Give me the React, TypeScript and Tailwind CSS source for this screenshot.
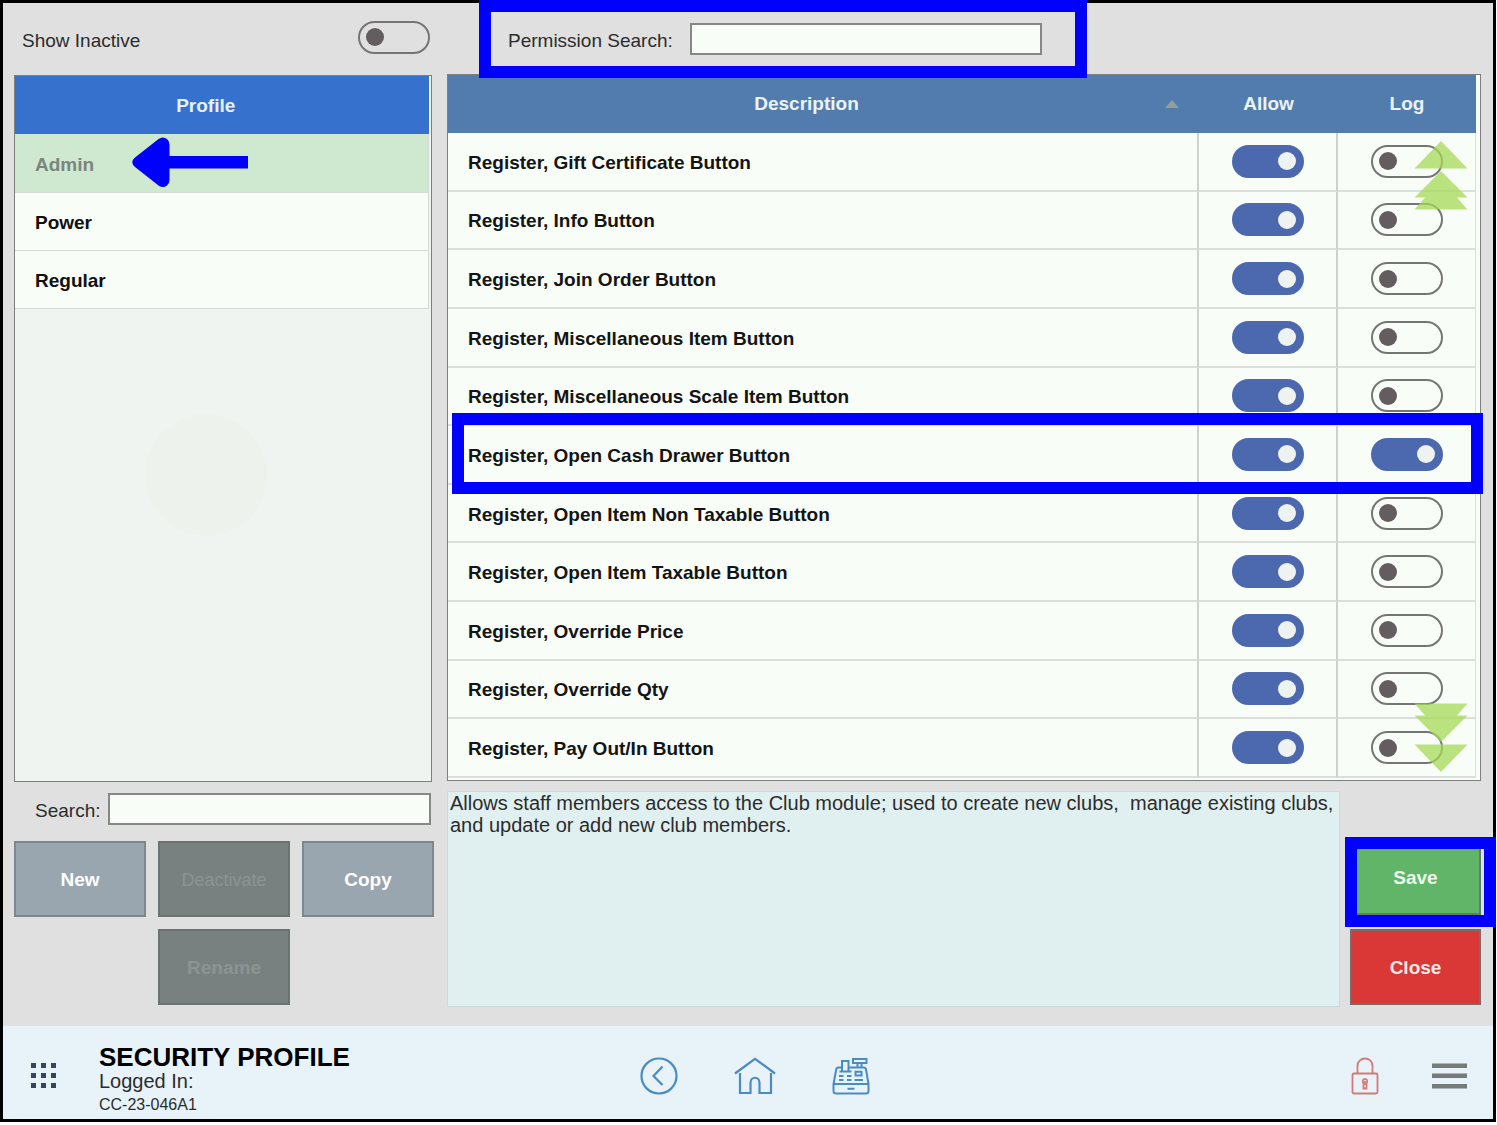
import React, { useState } from 'react';

interface Permission {
  name: string;
  allow: boolean;
  log: boolean;
  highlighted?: boolean;
}

const PROFILES = ['Admin', 'Power', 'Regular'];

const PERMISSIONS: Permission[] = [
  { name: 'Register, Gift Certificate Button', allow: true, log: false },
  { name: 'Register, Info Button', allow: true, log: false },
  { name: 'Register, Join Order Button', allow: true, log: false },
  { name: 'Register, Miscellaneous Item Button', allow: true, log: false },
  { name: 'Register, Miscellaneous Scale Item Button', allow: true, log: false },
  { name: 'Register, Open Cash Drawer Button', allow: true, log: true, highlighted: true },
  { name: 'Register, Open Item Non Taxable Button', allow: true, log: false },
  { name: 'Register, Open Item Taxable Button', allow: true, log: false },
  { name: 'Register, Override Price', allow: true, log: false },
  { name: 'Register, Override Qty', allow: true, log: false },
  { name: 'Register, Pay Out/In Button', allow: true, log: false },
];

interface ToggleProps {
  id?: string;
  label?: string;
  initial?: boolean;
}

const Toggle: React.FC<ToggleProps> = ({ id, label, initial = false }) => {
  const [on, setOn] = useState(initial);
  return (
    <input
      id={id}
      type="checkbox"
      role="switch"
      aria-label={label}
      checked={on}
      onChange={() => setOn(!on)}
      className="appearance-none shrink-0 w-[72px] h-[33px] px-[6px] flex items-center rounded-full border-2 border-[#767575] cursor-pointer before:block before:size-[18px] before:rounded-full before:bg-[#635d60] checked:bg-[#4c68af] checked:border-[#4c68af] checked:before:bg-[#eff3ef] checked:before:ml-[38px]"
    />
  );
};

const Highlight: React.FC<{ className: string }> = ({ className }) => (
  <div className={`absolute z-10 border-12 border-[#0000ff] pointer-events-none ${className}`}></div>
);

const ScrollArrows: React.FC<{ label: string; className: string; flip?: boolean }> = ({ label, className, flip }) => (
  <button aria-label={label} className={`absolute right-[12px] ${className}`}>
    <svg width="54" height="69" viewBox="0 0 54 69" className={flip ? 'rotate-180' : ''}>
      <path
        d="M27 0 L53.5 27.5 H0.5 Z M27 30 L53.5 56.5 H43 L53.5 68.5 H0.5 L11 56.5 H0.5 Z"
        fill="#a5da58"
        fillOpacity="0.75"
      />
    </svg>
  </button>
);

const ProfilePanel = () => (
  <section className="w-[420px] shrink-0">
    <div className="h-[72px] pl-2 pr-1 flex items-center justify-between">
      <label htmlFor="show-inactive" className="pt-1">Show Inactive</label>
      <div className="pb-1">
        <Toggle id="show-inactive" />
      </div>
    </div>

    <div className="relative h-[707px] mr-[2px] border border-[#7b7f7d] bg-[#eff4f0] pr-[2px]">
      <div className="absolute left-[130px] top-[338px] size-[122px] rounded-full bg-[#eef2ed]"></div>
      <table className="relative w-full border-collapse font-bold">
        <thead>
          <tr className="h-[58px] bg-[#3671ce] text-[#e6f1f7]">
            <th className="pr-8 pt-px">Profile</th>
          </tr>
        </thead>
        <tbody>
          {PROFILES.map((profile, i) => (
            <tr
              key={profile}
              className={i === 0 ? 'bg-[#cfe9d0] text-[#7b857d]' : 'bg-[#f8fdf8] text-[#101010]'}
            >
              <td className="relative h-[58px] pl-5 pt-1 border-b border-r border-[#d6dad6]">
                {profile}
                {i === 0 && (
                  <svg width="116" height="50" viewBox="0 0 116 50" className="absolute left-[117px] top-[3px]" fill="#0000ff">
                    <path d="M3 20.5 L26.5 2 Q31 -1 35 2 Q37.5 4 37.5 7.5 V19 H116 V31.5 H37.5 V43 Q37.5 46 35 48.5 Q31 51.5 26.5 48.5 L3 30 Q-2.5 25 3 20.5 Z" />
                  </svg>
                )}
              </td>
            </tr>
          ))}
        </tbody>
      </table>
    </div>

    <div className="mt-[11px] pl-[21px] pr-[3px] flex items-center">
      <label htmlFor="profile-search" className="w-[73px] pt-1">Search:</label>
      <input id="profile-search" type="text" className="flex-1 min-w-0 h-8 px-2 border-2 border-[#858885] bg-[#f8fdf8]" />
    </div>

    <div className="mt-4 grid grid-cols-3 gap-3 font-bold">
      <button className="h-[76px] pt-[2px] border-2 border-[#7d878d] bg-[#99a6af] text-white">New</button>
      <button disabled className="h-[76px] pt-[2px] border-2 border-[#6c7270] bg-[#798180] text-[#8d9391] text-lg font-normal">Deactivate</button>
      <button className="h-[76px] pt-[2px] border-2 border-[#7d878d] bg-[#99a6af] text-white">Copy</button>
      <button disabled className="col-start-2 h-[76px] pt-[2px] border-2 border-[#6c7270] bg-[#798180] text-[#8d9391]">Rename</button>
    </div>
  </section>
);

const PermissionPanel = () => (
  <section className="flex-1 min-w-0">
    <div className="relative h-[71px] pl-[61px] flex items-center">
      <label htmlFor="permission-search" className="w-[182px] pt-1">Permission Search:</label>
      <input id="permission-search" type="text" className="w-[352px] h-8 px-2 border-2 border-[#858885] bg-[#f8fdf8]" />
      <Highlight className="left-[32px] -top-[3px] w-[608px] h-[78px]" />
    </div>

    <div className="relative h-[707px] border border-[#7b7f7d] bg-[#f8fdf8] pr-1">
      <table className="w-full h-[703px] table-fixed border-separate border-spacing-0 font-bold">
        <colgroup>
          <col />
          <col className="w-[139px]" />
          <col className="w-[138px]" />
        </colgroup>
        <thead>
          <tr className="h-[58px] bg-[#537cae] text-[#eaf4f4]">
            <th>
              <div className="flex items-center pr-5">
                <span className="flex-1">Description</span>
                <svg width="14" height="8" viewBox="0 0 14 8">
                  <path d="M7 0 L14 8 H0 Z" fill="#929f9b" />
                </svg>
              </div>
            </th>
            <th>Allow</th>
            <th>Log</th>
          </tr>
        </thead>
        <tbody className="text-[#141414]">
          {PERMISSIONS.map((permission) => (
            <tr key={permission.name} className="relative">
              <td className="pl-5 pt-[3px] border-b-2 border-r-2 border-[#dcdedc] border-r-[#cfd1cf]">
                {permission.name}
                {permission.highlighted && <Highlight className="left-1 -right-[7px] -top-[13px] -bottom-[9px]" />}
              </td>
              <td className="border-b-2 border-r-2 border-[#dcdedc] border-r-[#cfd1cf]">
                <div className="flex justify-center">
                  <Toggle label={`Allow ${permission.name}`} initial={permission.allow} />
                </div>
              </td>
              <td className="border-b-2 border-r border-[#dcdedc]">
                <div className="flex justify-center">
                  <Toggle label={`Log ${permission.name}`} initial={permission.log} />
                </div>
              </td>
            </tr>
          ))}
        </tbody>
      </table>
      <ScrollArrows label="Scroll up" className="top-[66px]" />
      <ScrollArrows label="Scroll down" className="bottom-[8px]" flip />
    </div>

    <div className="mt-[10px] flex gap-[10px]">
      <p className="flex-1 h-[216px] border border-[#cbdcdc] bg-[#e0f0f0] pl-[2px] text-[20px] leading-[22px] whitespace-pre-wrap">
        Allows staff members access to the Club module; used to create new clubs,{'  '}manage existing clubs, and update or add new club members.
      </p>
      <div className="w-[131px] flex flex-col justify-end gap-[14px] pb-[2px] font-bold">
        <div className="relative">
          <button className="block w-full h-[76px] pt-[2px] border-2 border-[#667a69] bg-[#60b568] text-[#eef8ea]">Save</button>
          <Highlight className="-left-[5px] -right-[15px] -top-[2px] -bottom-3" />
        </div>
        <button className="h-[76px] pt-[2px] border-2 border-[#7c6a6a] bg-[#d93837] text-[#fbe9e6]">Close</button>
      </div>
    </div>
  </section>
);

const BackIcon = () => (
  <svg width="38" height="38" viewBox="0 0 38 38" fill="none" stroke="#4a8bc2" strokeWidth="2.2">
    <circle cx="19" cy="19" r="17.5" />
    <path d="M22.5 9.5 L13.5 19 L22.5 28" />
  </svg>
);

const HomeIcon = () => (
  <svg width="42" height="38" viewBox="0 0 42 38" fill="none" stroke="#4a8bc2" strokeWidth="2.2">
    <path d="M1 16.5 L21 1.8 L41 16.5" />
    <path d="M6 16 V36 H16.5 V26 C16.5 19 25.5 19 25.5 26 V36 H37 V16" />
  </svg>
);

const RegisterIcon = () => (
  <svg width="38" height="38" viewBox="0 0 38 38" fill="none" stroke="#4a8bc2" strokeWidth="2">
    <path d="M10 10.5 H6.5 Q4.5 10.5 4.2 12.5 L1.5 27 V34 Q1.5 36.5 4 36.5 H34 Q36.5 36.5 36.5 34 V27 L34 12.5 Q33.7 10.5 31.5 10.5 H17" />
    <path d="M1.5 27 H36.5 M15.5 31.8 H22.5" />
    <path d="M10 15 V4 H16.5 V15 M7.5 14.5 H19.5" />
    <path d="M21 2 H34.5 V6 H21 Z M25.5 6 V10 M29.5 6 V10" />
    <path d="M23.5 14.8 H29.5 V18.5 H23.5 Z" />
    <path d="M7 19 H11.5 M15 19 H19.5 M7 23 H11.5 M15 23 H19.5 M22.5 23 H31" />
  </svg>
);

const LockIcon = () => (
  <svg width="28" height="38" viewBox="0 0 28 38" fill="none" stroke="#d47a78" strokeWidth="1.8">
    <rect x="1.5" y="16.5" width="25" height="20" rx="1.5" />
    <path d="M6.5 16.5 V9 C6.500 -1 21.5 -1 21.5 9 V16.5" />
    <path d="M12.5 26.5 C9 20.5 19 20.5 15.5 26.5 V31.500 H12.5 Z" />
    <path d="M14 24 V28" />
  </svg>
);

const Footer = () => (
  <footer className="h-[93px] bg-[#e7f3f9] grid grid-cols-[1fr_auto_1fr] items-center">
    <div className="flex items-center">
      <button aria-label="Apps" className="ml-[28px] pt-[7px] w-[25px]">
        <svg width="26" height="26" viewBox="0 0 26 26" fill="#33465c">
          {[0, 10, 20].map((y) => [0, 10, 20].map((x) => <rect key={`${x}-${y}`} x={x} y={y} width="5" height="5" />))}
        </svg>
      </button>
      <div className="ml-[43px] pt-[16px] leading-6">
        <h1 className="text-[26px] font-bold text-black">SECURITY PROFILE</h1>
        <p className="text-[20px]">Logged In:</p>
        <p className="text-[16px]">CC-23-046A1</p>
      </div>
    </div>
    <nav className="flex items-center gap-[56px] pl-[13px] pt-[7px]">
      <button aria-label="Back"><BackIcon /></button>
      <button aria-label="Home"><HomeIcon /></button>
      <button aria-label="Register"><RegisterIcon /></button>
    </nav>
    <div className="flex items-center justify-end gap-[53px] pr-[26px] pt-[7px]">
      <button aria-label="Lock"><LockIcon /></button>
      <button aria-label="Menu">
        <svg width="35" height="26" viewBox="0 0 35 26" fill="#747b79">
          <path d="M0 0.5 H35 V5 H0 Z M0 10.5 H35 V15 H0 Z M0 21 H35 V25.5 H0 Z" />
        </svg>
      </button>
    </div>
  </footer>
);

export default function App() {
  return (
    <div className="bg-white pb-[3px] pr-px">
      <div className="border-3 border-black bg-[#e0e0e0] text-[19px] leading-6 text-[#2c2c2c] font-['Liberation_Sans',Arial,sans-serif]">
        <main className="flex gap-[13px] pl-[11px] pr-3 pb-[19px]">
          <ProfilePanel />
          <PermissionPanel />
        </main>
        <Footer />
      </div>
    </div>
  );
}
